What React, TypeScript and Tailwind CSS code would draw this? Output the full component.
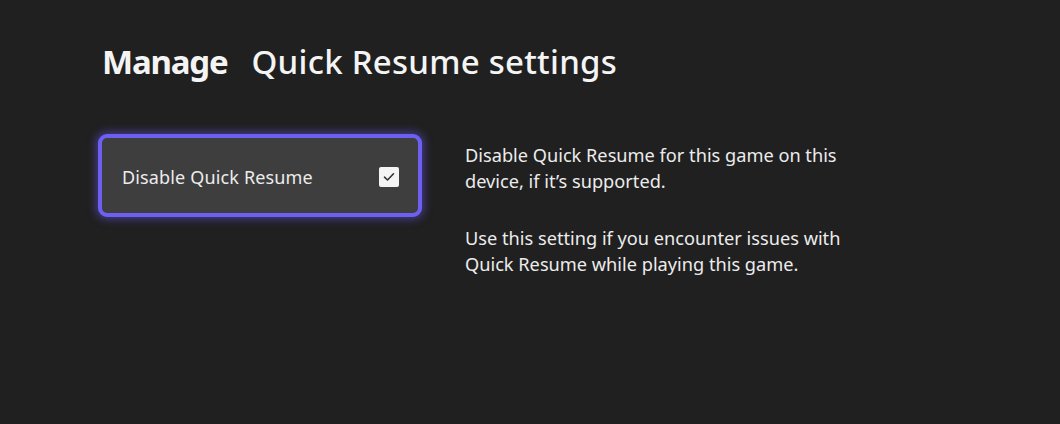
export default function App() {
  return (
    <div className="w-[1060px] h-[424px] bg-[#202020] text-white overflow-hidden" style={{ fontFamily: '"Noto Sans", "Open Sans", sans-serif' }}>
      <div className="pl-[102px] pt-[38px]">
        <h1 className="flex items-baseline text-[33px] leading-[48px] text-[#f4f4f4]">
          <span className="font-bold tracking-[-1.2px]">Manage</span>
          <span className="ml-[24px] font-medium tracking-[0.25px]">Quick Resume settings</span>
        </h1>
        <div className="flex mt-[48px] ml-[-4px]">
          <div className="w-[324px] h-[83px] rounded-[9px] border-[4px] border-[#6d5ff2] bg-[#3e3e3e] shadow-[0_0_8px_2px_rgba(105,90,245,0.5)] flex items-center justify-between pl-[20px] pr-[19px]">
            <span className="text-[18px] text-[#ececec] pt-[4px] tracking-[0.15px]">Disable Quick Resume</span>
            <span className="w-[20px] h-[20px] mt-[2px] rounded-[2px] bg-[#f4f4f4] flex items-center justify-center">
              <svg width="12" height="10" viewBox="0 0 12 10" fill="none">
                <path d="M1.5 5.2 L4.5 8 L10.5 1.8" stroke="#333333" strokeWidth="1.6" strokeLinecap="round" strokeLinejoin="round" />
              </svg>
            </span>
          </div>
          <div className="ml-[43px] mt-[9px] w-[420px] text-[18.2px] leading-[25.5px] text-[#ececec]">
            <p>Disable Quick Resume for this game on this<br />device, if it’s supported.</p>
            <p className="mt-[32px]">Use this setting if you encounter issues with<br />Quick Resume while playing this game.</p>
          </div>
        </div>
      </div>
    </div>
  );
}
